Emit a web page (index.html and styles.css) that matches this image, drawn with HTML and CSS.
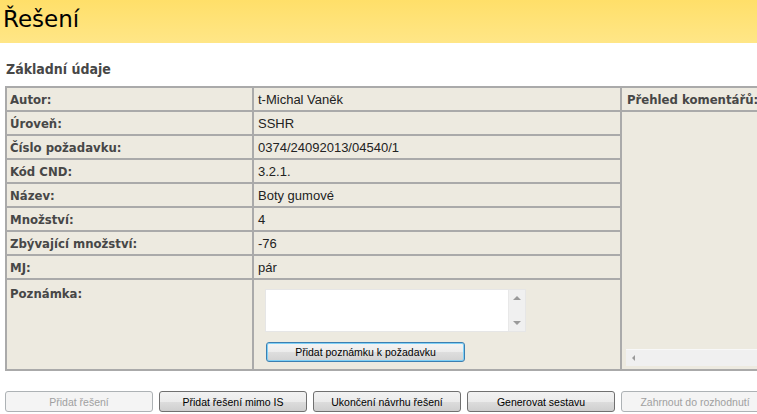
FILE: index.html
```html
<!DOCTYPE html>
<html lang="cs">
<head>
<meta charset="utf-8">
<title>Řešení</title>
<link rel="stylesheet" href="styles.css">
</head>
<body>
<div class="page">
  <header class="header"><h1 class="title">Řešení</h1></header>
  <h2 class="section-title">Základní údaje</h2>
  <table class="details">
    <colgroup>
      <col class="c-label"><col class="c-value"><col class="c-comments">
    </colgroup>
    <tr>
      <th class="label">Autor:</th>
      <td class="value">t-Michal Vaněk</td>
      <th class="label comments-head">Přehled komentářů:</th>
    </tr>
    <tr>
      <th class="label">Úroveň:</th>
      <td class="value">SSHR</td>
      <td class="comments" rowspan="8">
        <div class="comments-inner">
          <div class="hscroll"><span class="arrow-left"></span></div>
        </div>
      </td>
    </tr>
    <tr><th class="label">Číslo požadavku:</th><td class="value">0374/24092013/04540/1</td></tr>
    <tr><th class="label">Kód CND:</th><td class="value">3.2.1.</td></tr>
    <tr><th class="label">Název:</th><td class="value">Boty gumové</td></tr>
    <tr><th class="label">Množství:</th><td class="value">4</td></tr>
    <tr><th class="label">Zbývající množství:</th><td class="value">-76</td></tr>
    <tr><th class="label">MJ:</th><td class="value">pár</td></tr>
    <tr class="note-row">
      <th class="label">Poznámka:</th>
      <td class="value note-cell">
        <div class="note-box">
          <div class="note-area"></div>
          <div class="vscroll"><span class="arrow-up"></span><span class="arrow-down"></span></div>
        </div>
        <button class="btn btn-focus note-btn">Přidat poznámku k požadavku</button>
      </td>
    </tr>
  </table>
  <div class="actions">
    <button class="btn" disabled>Přidat řešení</button>
    <button class="btn">Přidat řešení mimo IS</button>
    <button class="btn">Ukončení návrhu řešení</button>
    <button class="btn">Generovat sestavu</button>
    <button class="btn" disabled>Zahrnout do rozhodnutí</button>
  </div>
</div>
</body>
</html>
```
FILE: styles.css
```css
html, body {
  margin: 0;
  padding: 0;
  background: #ffffff;
}
body {
  width: 757px;
  height: 414px;
  overflow: hidden;
  font-family: "Liberation Sans", Arial, sans-serif;
  font-size: 13px;
  color: #222222;
}
.page {
  width: 900px;
}
.header {
  height: 43px;
  background: linear-gradient(to bottom, #ffdf69 0%, #ffe687 100%);
  width: 757px;
}
.title {
  margin: 0;
  padding-left: 3px;
  font-family: "DejaVu Sans", sans-serif;
  font-weight: normal;
  font-size: 23px;
  line-height: 38px;
  color: #000000;
}
.section-title {
  margin: 17px 0 0 6px;
  font-family: "DejaVu Sans Condensed", "DejaVu Sans", sans-serif;
  font-stretch: condensed;
  font-size: 14px;
  line-height: 18px;
  font-weight: bold;
  color: #474747;
}
.details {
  margin: 8px 0 0 5px;
  border-collapse: separate;
  border-spacing: 0;
  border-top: 2px solid #aaaaaa;
  border-left: 2px solid #aaaaaa;
  background: #edeae0;
  table-layout: fixed;
  width: 800px;
}
.c-label { width: 247px; }
.c-value { width: 368px; }
.c-comments { width: 183px; }
.details th, .details td {
  border-right: 2px solid #aaaaaa;
  border-bottom: 2px solid #aaaaaa;
  height: 22px;
  padding: 0;
  vertical-align: middle;
  text-align: left;
  white-space: nowrap;
}
.details .label {
  padding-left: 3px;
  font-family: "DejaVu Sans Condensed", "DejaVu Sans", sans-serif;
  font-stretch: condensed;
  font-weight: bold;
  color: #474747;
}
.details .comments-head {
  padding-left: 5px;
}
.details .value {
  padding-left: 4px;
  color: #222222;
}
.details .comments {
  vertical-align: bottom;
  padding: 0 0 3px 4px;
}
.comments-inner {
  display: flex;
  align-items: flex-end;
}
.hscroll {
  flex: 1;
  height: 16px;
  background: #f0f0f0;
  border-top: 1px solid #f8f8f8;
  display: flex;
  align-items: center;
  padding-left: 6px;
}
.arrow-left {
  width: 0;
  height: 0;
  border-top: 3px solid transparent;
  border-bottom: 3px solid transparent;
  border-right: 3px solid #9a9a9a;
}
.note-row .label {
  vertical-align: top;
  padding-top: 6px;
}
.note-row th, .note-row td {
  height: 91px;
  box-sizing: border-box;
}
.note-cell {
  vertical-align: top !important;
  padding: 9px 0 0 11px !important;
}
.note-box {
  display: flex;
  width: 261px;
  height: 43px;
  box-sizing: border-box;
  border: 1px solid #e6e6e6;
  background: #ffffff;
}
.note-area {
  flex: 1;
}
.vscroll {
  width: 16px;
  background: #f0f0f0;
  border-left: 1px solid #e8e8e8;
  display: flex;
  flex-direction: column;
  justify-content: space-between;
  align-items: center;
  padding: 6px 0 6px;
}
.arrow-up {
  width: 0;
  height: 0;
  border-left: 4px solid transparent;
  border-right: 4px solid transparent;
  border-bottom: 4px solid #9a9a9a;
}
.arrow-down {
  width: 0;
  height: 0;
  border-left: 4px solid transparent;
  border-right: 4px solid transparent;
  border-top: 4px solid #9a9a9a;
}
.btn {
  font-family: "Liberation Sans", Arial, sans-serif;
  font-size: 10.5px;
  color: #000000;
  height: 21px;
  width: 148px;
  flex: 0 0 148px;
  padding: 0;
  margin: 0;
  border: 1px solid #707070;
  border-radius: 3px;
  background: linear-gradient(to bottom, #f2f2f2 0%, #ebebeb 50%, #dddddd 51%, #cfcfcf 100%);
  box-sizing: border-box;
  white-space: nowrap;
}
.btn:disabled {
  color: #a0a0a0;
  border-color: #adb2b5;
  background: #f4f4f4;
}
.btn-focus {
  border-color: #3c7fb1;
  box-shadow: inset 0 0 0 1px #7fd0f6;
  background: linear-gradient(to bottom, #f4f4f4 0%, #ececec 50%, #dedede 51%, #d2d2d2 100%);
}
.note-btn {
  display: block;
  margin-top: 10px;
  margin-left: 1px;
  width: 199px;
  height: 20px;
}
.actions {
  display: flex;
  gap: 6px;
  margin: 20px 0 0 5px;
}
```
